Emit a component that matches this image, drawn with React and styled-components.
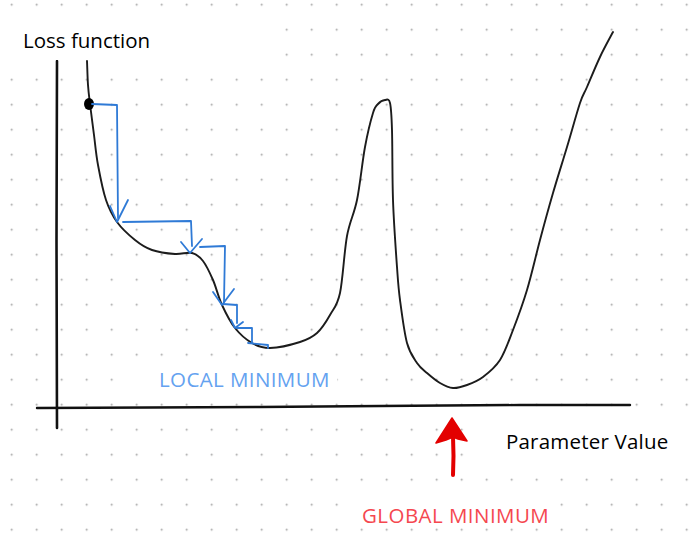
import React from 'react';
import styled, { createGlobalStyle } from 'styled-components';

const GlobalStyle = createGlobalStyle`
  html, body {
    margin: 0;
    padding: 0;
    background: #ffffff;
  }
  body {
    font-family: "Open Sans", "Noto Sans", sans-serif;
  }
`;

const Canvas = styled.div`
  position: relative;
  width: 693px;
  height: 538px;
  overflow: hidden;
  background: #ffffff;
`;

const Chart = styled.svg`
  display: block;
  width: 693px;
  height: 538px;
`;

// text boxes sit on the sheet and hide the grid dots behind them
const Label = styled.div`
  position: absolute;
  left: ${(p) => p.$x}px;
  top: ${(p) => p.$y}px;
  width: ${(p) => p.$w}px;
  height: ${(p) => p.$h}px;
  padding: ${(p) => p.$pt}px 0 0 ${(p) => p.$pl}px;
  box-sizing: border-box;
  background: #ffffff;
  color: ${(p) => p.$color || '#000000'};
  font-size: 20.5px;
  line-height: 20px;
  letter-spacing: ${(p) => p.$ls || 0}px;
  white-space: nowrap;
`;

const lossCurve = [
  [87, 61], [88, 85], [90, 104], [94, 135], [98, 165], [106, 200], [117, 222],
  [135, 240], [152, 250], [175, 254], [192, 253], [203, 261], [213, 280],
  [222, 305], [235, 328], [252, 343], [270, 348], [300, 342], [317, 333],
  [330, 315], [340, 293], [347, 236], [357, 200], [365, 147], [373, 113],
  [378, 104], [385, 100], [390, 103], [392, 130], [393, 200], [397, 267],
  [400, 300], [407, 343], [417, 363], [427, 373], [440, 383], [453, 388],
  [467, 385], [483, 377], [500, 360], [513, 330], [527, 290], [540, 240],
  [553, 193], [567, 147], [580, 103], [587, 87], [600, 57], [613, 32],
];

// catmull-rom through the points, as cubic beziers
const smooth = (pts) => {
  let d = `M${pts[0][0]},${pts[0][1]}`;
  for (let i = 0; i < pts.length - 1; i++) {
    const p0 = pts[i - 1] || pts[i];
    const p1 = pts[i];
    const p2 = pts[i + 1];
    const p3 = pts[i + 2] || p2;
    const c1x = p1[0] + (p2[0] - p0[0]) / 6;
    const c1y = p1[1] + (p2[1] - p0[1]) / 6;
    const c2x = p2[0] - (p3[0] - p1[0]) / 6;
    const c2y = p2[1] - (p3[1] - p1[1]) / 6;
    d += ` C${c1x.toFixed(1)},${c1y.toFixed(1)} ${c2x.toFixed(1)},${c2y.toFixed(1)} ${p2[0]},${p2[1]}`;
  }
  return d;
};

const steps = [
  'M92,104 L117,105 L118,218',
  'M110,206 L117,222 L128,200',
  'M123,222 L191,221 L192,246',
  'M181,242 L190,253 L202,239',
  'M200,247 L225,246 L224,302',
  'M213,292 L222,305 L234,289',
  'M223,304 L237,305 L237,323',
  'M231,320 L235,328 L243,322',
  'M237,328 L252,328 L252,343',
  'M248,343 L268,345 L268,348',
];

const App = () => (
  <>
    <GlobalStyle />
    <Canvas>
      <Chart viewBox="0 0 693 538">
        <defs>
          <pattern id="dots" x="-0.8" y="-7.8" width="25" height="25" patternUnits="userSpaceOnUse">
            <circle cx="12.5" cy="12.5" r="1" fill="#a2a2a2" />
          </pattern>
        </defs>
        <rect width="693" height="538" fill="url(#dots)" />

        {/* axes */}
        <path d="M57,61 L56.5,240 L57,428" stroke="#111" strokeWidth="2.6" fill="none" strokeLinecap="round" />
        <path d="M37,408 L150,407.5 L260,407 L380,406 L520,405 L630,405" stroke="#111" strokeWidth="2.4" fill="none" strokeLinecap="round" />

        {/* loss curve */}
        <path d={smooth(lossCurve)} stroke="#1c1c1c" strokeWidth="1.9" fill="none" strokeLinecap="round" strokeLinejoin="round" />
        <ellipse cx="89" cy="104" rx="5" ry="6" fill="#000" />

        {/* gradient descent steps */}
        {steps.map((d) => (
          <path key={d} d={d} stroke="#2f7ad6" strokeWidth="1.8" fill="none" strokeLinecap="round" strokeLinejoin="round" />
        ))}

        {/* global minimum arrow */}
        <path d="M452,418 L467,441 L458,439 L453,437 L446,440 L436,443 Z" fill="#e30000" stroke="#e30000" strokeWidth="1.5" strokeLinejoin="round" />
        <path d="M453,436 L453.5,456 L453,475" stroke="#e30000" strokeWidth="4" fill="none" strokeLinecap="round" />
      </Chart>

      <Label $x={0} $y={15} $w={280} $h={45} $pt={14.7} $pl={23}>Loss function</Label>
      <Label $x={132} $y={364} $w={205} $h={28} $pt={4.7} $pl={27} $ls={0.4} $color="#64a2f0">LOCAL MINIMUM</Label>
      <Label $x={472} $y={420} $w={221} $h={42} $pt={10.7} $pl={34} $ls={0.2}>Parameter Value</Label>
      <Label $x={345} $y={492} $w={205} $h={25} $pt={12.7} $pl={17} $ls={0.45} $color="#f5474f">GLOBAL MINIMUM</Label>
    </Canvas>
  </>
);

export default App;
